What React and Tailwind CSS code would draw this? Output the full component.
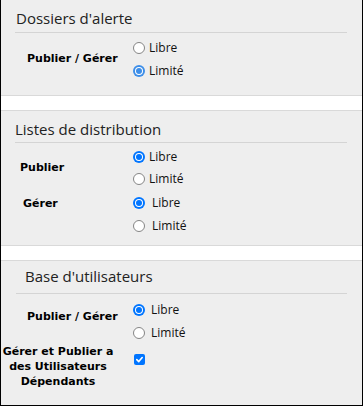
import React from "react";

const Radio = ({ checked, light }) =>
  checked ? (
    <span
      className={`w-[12px] h-[12px] rounded-full flex items-center justify-center shrink-0 ${
        light ? "bg-[#3d8ee8]" : "bg-[#0075ff]"
      }`}
    >
      <span className="w-[8px] h-[8px] rounded-full bg-white flex items-center justify-center">
        <span className={`w-[6px] h-[6px] rounded-full ${light ? "bg-[#3d8ee8]" : "bg-[#0075ff]"}`} />
      </span>
    </span>
  ) : (
    <span className="w-[12px] h-[12px] rounded-full border border-[#858585] bg-white shrink-0" />
  );

const Option = ({ label, checked, light, h = "h-[23px]", gap = "ml-[4px]" }) => (
  <div className={`flex items-center ${h}`}>
    <Radio checked={checked} light={light} />
    <span className={`${gap} text-[12px] text-[#111] font-['Open_Sans',sans-serif]`}>{label}</span>
  </div>
);

const Title = ({ children, className = "" }) => (
  <h2 className={`text-[15px] leading-[20px] text-[#222] font-['Open_Sans',sans-serif] ${className}`}>
    {children}
  </h2>
);

const Label = ({ children, className = "" }) => (
  <div className={`text-[11px] font-bold text-black font-['DejaVu_Sans',sans-serif] ${className}`}>
    {children}
  </div>
);

export default function App() {
  return (
    <div className="w-[363px] h-[406px] bg-white border-x border-b border-black flex flex-col gap-[14px] overflow-hidden">
      {/* Dossiers d'alerte */}
      <section className="bg-[#eeeeee] border-b border-[#d9d9d9] h-[96px] pt-[8px]">
        <Title className="pl-[15px]">Dossiers d'alerte</Title>
        <div className="mt-[4px] ml-[14px] mr-[15px] border-t border-[#d4d4d4]" />
        <div className="flex mt-[3px]">
          <div className="w-[132px] flex items-center pl-[26px]">
            <Label>Publier / Gérer</Label>
          </div>
          <div className="flex flex-col">
            <Option label="Libre" />
            <Option label="Limité" checked light />
          </div>
        </div>
      </section>

      {/* Listes de distribution */}
      <section className="bg-[#eeeeee] border-y border-[#d9d9d9] h-[136px] pt-[8px]">
        <Title className="pl-[14px]">Listes de distribution</Title>
        <div className="mt-[3px] ml-[14px] mr-[15px] border-t border-[#d4d4d4]" />
        <div className="flex mt-[3px]">
          <div className="w-[132px] flex items-center pl-[19px]">
            <Label>Publier</Label>
          </div>
          <div className="flex flex-col">
            <Option label="Libre" checked h="h-[22px]" />
            <Option label="Limité" h="h-[22px]" />
          </div>
        </div>
        <div className="flex mt-px">
          <div className="w-[132px] pl-[22px] pt-[5px]">
            <Label>Gérer</Label>
          </div>
          <div className="flex flex-col">
            <Option label="Libre" checked gap="ml-[7px]" />
            <Option label="Limité" gap="ml-[7px]" />
          </div>
        </div>
      </section>

      {/* Base d'utilisateurs */}
      <section className="bg-[#eeeeee] border-t border-[#d9d9d9] flex-1 pt-[5px]">
        <Title className="pl-[24px]">Base d'utilisateurs</Title>
        <div className="mt-[7px] ml-[15px] mr-[15px] border-t border-[#d4d4d4]" />
        <div className="flex mt-[5px]">
          <div className="w-[132px] pl-[26px] pt-[10px]">
            <Label>Publier / Gérer</Label>
          </div>
          <div className="flex flex-col gap-px">
            <Option label="Libre" checked h="h-[22px]" gap="ml-[6px]" />
            <Option label="Limité" h="h-[22px]" gap="ml-[6px]" />
          </div>
        </div>
        <div className="flex">
          <div className="w-[114px] text-center">
            <Label className="leading-[15px]">
              Gérer et Publier a
              <br />
              des Utilisateurs
              <br />
              Dépendants
            </Label>
          </div>
          <div className="ml-[19px] mt-[10px]">
            <span className="w-[11px] h-[11px] rounded-[2px] bg-[#0075ff] flex items-center justify-center">
              <svg width="9" height="9" viewBox="0 0 10 10" fill="none">
                <path d="M2 5.2 L4.2 7.3 L8 2.8" stroke="white" strokeWidth="1.8" strokeLinecap="round" strokeLinejoin="round" />
              </svg>
            </span>
          </div>
        </div>
      </section>
    </div>
  );
}
